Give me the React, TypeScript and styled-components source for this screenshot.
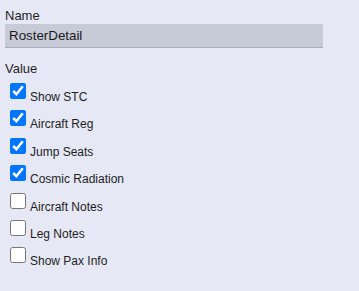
import React from 'react'
import styled, { createGlobalStyle } from 'styled-components'

const Global = createGlobalStyle`
  html, body {
    margin: 0;
    background: #e6e8f5;
  }
  body {
    font-family: 'Liberation Sans', Arial, sans-serif;
    color: #1e1e1e;
  }
`

const Panel = styled.div`
  width: 359px;
  height: 291px;
  padding: 7px 0 0 5px;
  box-sizing: border-box;
`

const FieldLabel = styled.div<{ $gap?: number }>`
  font-size: 13px;
  line-height: 17px;
  margin-top: ${p => p.$gap || 0}px;
`

const NameInput = styled.input`
  display: block;
  width: 318px;
  height: 24px;
  box-sizing: border-box;
  margin: 0;
  padding: 0 0 1px 4px;
  border: none;
  border-bottom: 1px solid #a9adbb;
  background: #c7cbd7;
  font-family: 'Liberation Sans', Arial, sans-serif;
  font-size: 13.33px;
  color: #1a1a1a;
  outline: none;
`

const List = styled.div`
  margin-top: 3px;
  display: flex;
  flex-direction: column;
`

const Row = styled.label`
  display: flex;
  align-items: flex-start;
  height: 27.4px;
`

const Box = styled.input`
  width: 16px;
  height: 16px;
  margin: 3px 4px 0 5px;
  flex: none;
`

const Text = styled.span`
  font-size: 12px;
  line-height: 14px;
  padding-top: 10px;
`

const options = [
  { label: 'Show STC', checked: true },
  { label: 'Aircraft Reg', checked: true },
  { label: 'Jump Seats', checked: true },
  { label: 'Cosmic Radiation', checked: true },
  { label: 'Aircraft Notes', checked: false },
  { label: 'Leg Notes', checked: false },
  { label: 'Show Pax Info', checked: false },
]

const App: React.FC = () => {
  return (
    <Panel>
      <Global />
      <FieldLabel>Name</FieldLabel>
      <NameInput defaultValue='RosterDetail' />
      <FieldLabel $gap={12}>Value</FieldLabel>
      <List>
        {options.map(o => (
          <Row key={o.label}>
            <Box type='checkbox' defaultChecked={o.checked} />
            <Text>{o.label}</Text>
          </Row>
        ))}
      </List>
    </Panel>
  )
}

export default App
